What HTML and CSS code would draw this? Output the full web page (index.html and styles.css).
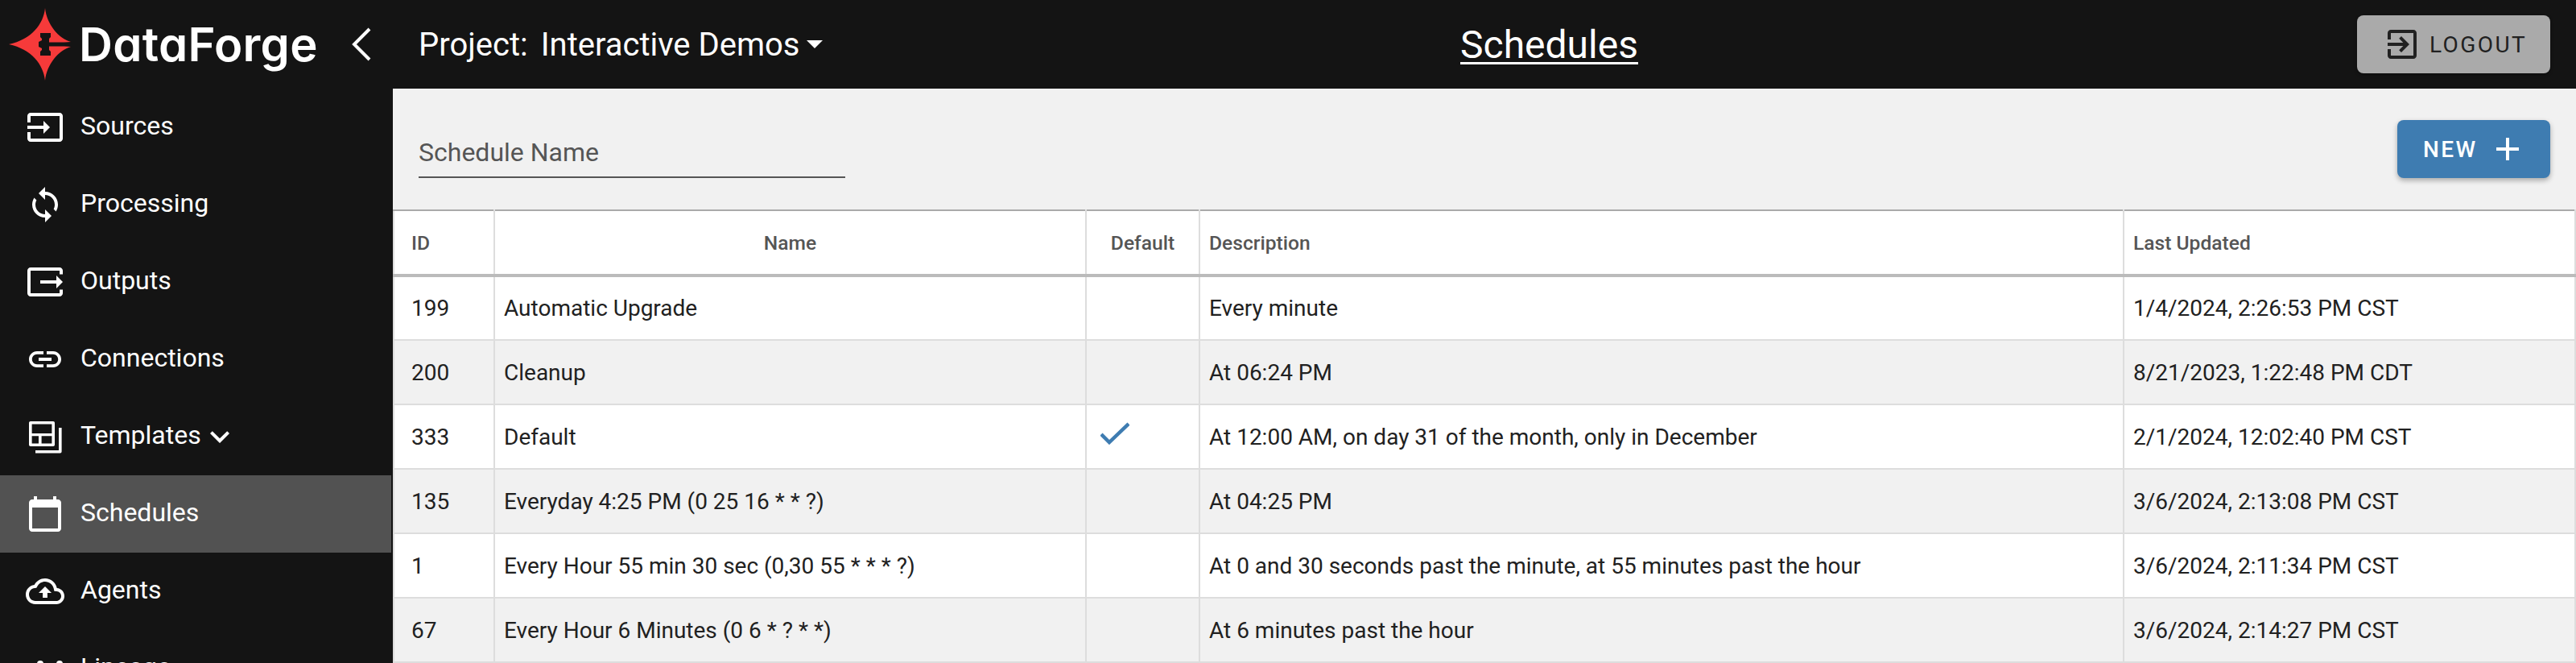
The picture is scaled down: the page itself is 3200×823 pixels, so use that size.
FILE: index.html
```html
<!DOCTYPE html>
<html lang="en">
<head>
<meta charset="utf-8">
<title>Schedules</title>
<link rel="stylesheet" href="styles.css">
</head>
<body>
<div class="app">
  <aside class="sidebar">
    <div class="brand">
      <svg class="logo" viewBox="0 0 78 90" aria-hidden="true">
        <path class="logo-star" d="M45 0C47 20 62 38 77 42L53 45L77 48C62 52 47 70 45 90C43 70 28 51 0 45C28 39 43 20 45 0Z"/>
        <path class="logo-hammer" d="M39 31H52V36L50 38V42.500H78V47.500H50V52L52 54V59H39V54L41 52V50L37 48V42L41 40V38L39 36Z"/>
      </svg>
      <span class="brand-name">DataForge</span>
      <svg class="collapse" viewBox="0 0 26 42" aria-hidden="true"><path d="M23 2L4 21L23 40"/></svg>
    </div>
    <nav class="nav">
      <a class="nav-item"><svg class="nav-icon" viewBox="0 0 24 24"><path d="M21 3.010H3c-1.100 0-2 .9-2 2V9h2V4.990h18v14.030H3V15H1v4.010c0 1.100.9 1.980 2 1.980h18c1.100 0 2-.88 2-1.980v-14c0-1.110-.9-2-2-2zM11 16l4-4-4-4v3H1v2h10v3z"/></svg><span>Sources</span></a>
      <a class="nav-item"><svg class="nav-icon" viewBox="0 0 24 24"><path d="M12 4V1L8 5l4 4V6c3.310 0 6 2.690 6 6 0 1.010-.25 1.970-.7 2.800l1.460 1.460C19.540 15.030 20 13.570 20 12c0-4.420-3.580-8-8-8zm0 14c-3.310 0-6-2.690-6-6 0-1.010.25-1.970.7-2.800L5.240 7.740C4.460 8.970 4 10.430 4 12c0 4.420 3.580 8 8 8v3l4-4-4-4v3z"/></svg><span>Processing</span></a>
      <a class="nav-item"><svg class="nav-icon" viewBox="0 0 24 24"><path d="M3 3.010h18c1.100 0 2 .89 2 2V7.300h-2V4.990H3v14.030h18V16.700h2v2.310c0 1.100-.9 1.980-2 1.980H3c-1.100 0-2-.88-2-1.980v-14c0-1.110.9-2 2-2zM19 16l4-4-4-4v3H9v2h10v3z"/></svg><span>Outputs</span></a>
      <a class="nav-item"><svg class="nav-icon" viewBox="0 0 24 24"><path d="M3.900 12c0-1.710 1.390-3.100 3.100-3.100h4V7H7c-2.760 0-5 2.240-5 5s2.240 5 5 5h4v-1.900H7c-1.710 0-3.100-1.390-3.100-3.100zM8 13h8v-2H8v2zm9-6h-4v1.900h4c1.710 0 3.100 1.390 3.100 3.100s-1.390 3.100-3.100 3.100h-4V17h4c2.760 0 5-2.240 5-5s-2.240-5-5-5z"/></svg><span>Connections</span></a>
      <a class="nav-item"><svg class="nav-icon icon-evenodd" viewBox="0 0 24 24"><path d="M3 2.500h14c.6 0 1 .4 1 1V17c0 .6-.4 1-1 1H3c-.6 0-1-.4-1-1V3.500c0-.6.4-1 1-1zM3.800 4.300V10h12.400V4.300zM3.800 11.600V16.200H8V11.600zM9.800 11.600V16.200h6.400V11.600zM20.500 6.500h1.800V21.300c0 .6-.4 1-1 1H6v-1.800h14.500z"/></svg><span>Templates</span><svg class="caret-down" viewBox="0 0 24 24"><path d="M7.410 8.590L12 13.170l4.590-4.580L18 10l-6 6-6-6 1.410-1.410z"/></svg></a>
      <a class="nav-item is-active"><svg class="nav-icon" viewBox="0 0 24 24"><path d="M20 3h-1V1h-2v2H7V1H5v2H4c-1.100 0-2 .9-2 2v16c0 1.100.9 2 2 2h16c1.100 0 2-.9 2-2V5c0-1.100-.9-2-2-2zm0 18H4V8h16v13z"/></svg><span>Schedules</span></a>
      <a class="nav-item"><svg class="nav-icon" viewBox="0 0 24 24"><path d="M19.350 10.040C18.670 6.590 15.640 4 12 4 9.110 4 6.600 5.640 5.350 8.040 2.340 8.360 0 10.910 0 14c0 3.310 2.690 6 6 6h13c2.760 0 5-2.240 5-5 0-2.640-2.050-4.780-4.650-4.960zM19 18H6c-2.210 0-4-1.790-4-4 0-2.050 1.530-3.760 3.560-3.970l1.070-.11.5-.95C8.080 7.140 9.940 6 12 6c2.620 0 4.880 1.860 5.390 4.430l.3 1.500 1.530.11c1.560.1 2.780 1.410 2.780 2.960 0 1.650-1.350 3-3 3zM8 13h2.550v3h2.900v-3H16l-4-4z"/></svg><span>Agents</span></a>
      <a class="nav-item"><svg class="nav-icon" viewBox="0 0 24 24"><path d="M9 7a2 2 0 1 1 0 4 2 2 0 0 1 0-4zm12 0a2 2 0 1 1 0 4 2 2 0 0 1 0-4zM3 13a2 2 0 1 1 0 4 2 2 0 0 1 0-4zm12 0a2 2 0 1 1 0 4 2 2 0 0 1 0-4z"/></svg><span>Lineage</span></a>
    </nav>
  </aside>
  <main class="main">
    <header class="topbar">
      <div class="project"><span>Project:</span><span>Interactive Demos</span><i class="project-caret"></i></div>
      <h1 class="page-title">Schedules</h1>
      <button class="btn btn-logout"><svg class="btn-icon" viewBox="0 0 24 24"><path d="M19 3H5c-1.110 0-2 .9-2 2v4h2V5h14v14H5v-4H3v4c0 1.100.89 2 2 2h14c1.100 0 2-.9 2-2V5c0-1.100-.9-2-2-2zm-8.920 12.580L11.500 17l5-5-5-5-1.410 1.410L12.670 11H3v2h9.670l-2.590 2.580z"/></svg><span>LOGOUT</span></button>
    </header>
    <section class="toolbar">
      <div class="search">Schedule Name</div>
      <button class="btn btn-new"><span>NEW</span><svg class="btn-icon" viewBox="0 0 24 24"><path d="M19 13h-6v6h-2v-6H5v-2h6V5h2v6h6v2z"/></svg></button>
    </section>
    <table class="grid">
      <colgroup><col class="c-id"><col class="c-name"><col class="c-def"><col class="c-desc"><col class="c-upd"></colgroup>
      <thead>
        <tr><th class="id">ID</th><th class="center">Name</th><th class="center">Default</th><th>Description</th><th>Last Updated</th></tr>
      </thead>
      <tbody>
        <tr><td class="id">199</td><td>Automatic Upgrade</td><td></td><td>Every minute</td><td>1/4/2024, 2:26:53 PM CST</td></tr>
        <tr><td class="id">200</td><td>Cleanup</td><td></td><td>At 06:24 PM</td><td>8/21/2023, 1:22:48 PM CDT</td></tr>
        <tr><td class="id">333</td><td>Default</td><td class="check-cell"><svg class="check" viewBox="0 0 36 28"><path d="M1 15L11 25L35 2"/></svg></td><td>At 12:00 AM, on day 31 of the month, only in December</td><td>2/1/2024, 12:02:40 PM CST</td></tr>
        <tr><td class="id">135</td><td>Everyday 4:25 PM (0 25 16 * * ?)</td><td></td><td>At 04:25 PM</td><td>3/6/2024, 2:13:08 PM CST</td></tr>
        <tr><td class="id">1</td><td>Every Hour 55 min 30 sec (0,30 55 * * * ?)</td><td></td><td>At 0 and 30 seconds past the minute, at 55 minutes past the hour</td><td>3/6/2024, 2:11:34 PM CST</td></tr>
        <tr><td class="id">67</td><td>Every Hour 6 Minutes (0 6 * ? * *)</td><td></td><td>At 6 minutes past the hour</td><td>3/6/2024, 2:14:27 PM CST</td></tr>
      </tbody>
    </table>
  </main>
</div>
</body>
</html>
```
FILE: styles.css
```css
* { box-sizing: border-box; }
html, body { margin: 0; height: 100%; overflow: hidden; }
body { font-family: Roboto, "Liberation Sans", sans-serif; color: #212121; background: #f1f1f1; }
.app { display: flex; width: 3200px; height: 823px; overflow: hidden; }
.sidebar { flex: 0 0 488px; background: #141414; color: #fff; padding-right: 2px; }
.brand { display: flex; align-items: center; height: 110px; padding-left: 11px; }
.logo { width: 78px; height: 90px; flex: none; }
.logo-star { fill: #f63a3a; }
.logo-hammer { fill: #141414; }
.brand-name { margin-left: 9px; font-family: Inter, sans-serif; font-size: 58px; font-weight: 600; font-feature-settings: "cv11"; letter-spacing: .3px; line-height: 1; }
.collapse { width: 26px; height: 42px; margin-left: 41px; fill: none; stroke: #fff; stroke-width: 4; }
.nav { display: flex; flex-direction: column; }
.nav-item { display: flex; align-items: center; flex: 0 0 96px; padding-left: 32px; font-size: 32px; color: #fff; }
.nav-item span { margin: 0 0 4px 20px; }
.nav-item.is-active { background: #525252; }
.nav-icon { width: 48px; height: 48px; fill: #fff; flex: none; }
.icon-evenodd { fill-rule: evenodd; }
.caret-down { width: 48px; height: 48px; fill: #fff; margin-left: -1px; }
.main { flex: 1; min-width: 0; display: flex; flex-direction: column; }
.topbar { display: flex; align-items: center; height: 110px; background: #141414; color: #fff; padding: 0 32px; }
.project { display: flex; align-items: center; gap: 16px; font-size: 40px; width: 1294px; }
.project-caret { width: 0; height: 0; border: 10px solid transparent; border-top-color: #fff; border-bottom-width: 0; margin-left: -8px; }
.page-title { margin: 0; font-size: 48px; font-weight: 400; text-decoration: underline; text-underline-offset: 5px; text-decoration-thickness: 3px; flex: 1; }
.btn { display: flex; align-items: center; height: 72px; border: 0; border-radius: 8px; font-family: inherit; font-size: 28px; }
.btn-logout { width: 240px; gap: 10px; padding: 0 0 0 32px; background: #aaa; color: #212121; letter-spacing: 2.4px; box-shadow: 0 2px 4px rgba(0,0,0,.3); }
.btn-new { width: 190px; gap: 13px; padding: 0 0 0 32px; background: #3e7cb1; color: #fff; font-weight: 500; letter-spacing: 2.4px; box-shadow: 0 3px 6px rgba(0,0,0,.3); }
.btn-icon { width: 48px; height: 48px; fill: currentColor; flex: none; }
.toolbar { display: flex; justify-content: space-between; align-items: flex-start; height: 150px; padding: 39px 32px 0; }
.search { width: 530px; height: 72px; border-bottom: 2px solid #555; color: #555; font-size: 32px; padding-top: 21px; }
.grid { width: 2712px; table-layout: fixed; border-collapse: collapse; background: #fff; font-size: 28px; }
.c-id { width: 125px; } .c-name { width: 735px; } .c-def { width: 141px; } .c-desc { width: 1148px; }
.grid th { height: 81px; font-size: 24.6px; font-weight: 500; color: #555; text-align: left; padding: 0 11px; border-top: 2px solid #aaa; border-bottom: 4px solid #bbb; border-left: 2px solid #ddd; border-right: 2px solid #ddd; }
.grid th.center { text-align: center; }
.grid td { height: 80px; padding: 0 11px; border: 2px solid #ddd; }
.grid .id { padding-left: 21px; }
.grid tbody tr:nth-child(even) { background: #f1f1f1; }
.check { display: block; width: 36px; height: 28px; margin: -8px 0 0 6px; fill: none; stroke: #3e7cb1; stroke-width: 4.5; }
```
